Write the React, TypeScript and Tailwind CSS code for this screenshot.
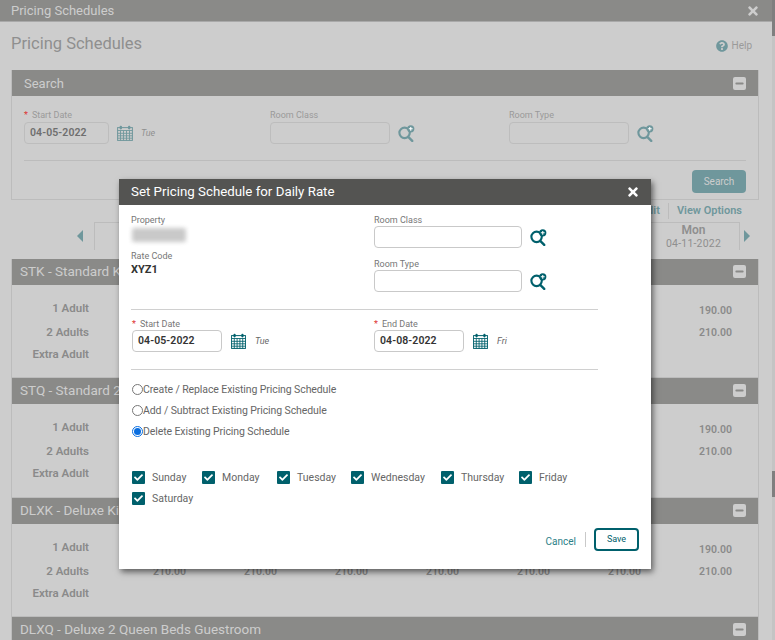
import { Minus } from "lucide-react";
import { FaCheck, FaQuestionCircle, FaTimes } from "react-icons/fa";

const font = "font-['Roboto','Open_Sans',sans-serif]";
const rooms = [
    { name: "STK - Standard King Guestroom", h: "h-[119px]", rows: true },
    { name: "STQ - Standard 2 Queen Beds Guestroom", h: "h-[120px]", rows: true },
    { name: "DLXK - Deluxe King Guestroom", h: "h-[119px]", rows: true },
    { name: "DLXQ - Deluxe 2 Queen Beds Guestroom", h: "h-[26px]", rows: false },
];
const days = ["Sunday", "Monday", "Tuesday", "Wednesday", "Thursday", "Friday", "Saturday"];

function CalendarIcon({ className }: { className: string }) {
    return (
        <svg viewBox="0 0 16 16" preserveAspectRatio="none" className={className} fill="none" stroke="currentColor">
            <rect x="0.6" y="2.6" width="14.8" height="12.8" />
            <path d="M0.5 5.5h15M0.5 8.3h15M0.5 10.8h15M0.5 13.2h15M3.5 5.5v10M6.5 5.5v10M9.5 5.5v10M12.5 5.5v10" strokeWidth="0.9" />
            <rect x="2.6" y="0.8" width="2.4" height="3.6" rx="1.1" fill="currentColor" stroke="none" />
            <rect x="11" y="0.8" width="2.4" height="3.6" rx="1.1" fill="currentColor" stroke="none" />
        </svg>
    );
}

function LookupIcon({ className }: { className: string }) {
    return (
        <svg viewBox="0 0 16 16" className={className} fill="none" stroke="currentColor">
            <circle cx="6.2" cy="7.4" r="4.9" strokeWidth="2" />
            <path d="M9.6 11.2l3.8 3.8" strokeWidth="2.2" strokeLinecap="round" />
            <circle cx="12" cy="3.6" r="3.4" fill="currentColor" stroke="none" />
            <path d="M12 1.8v3.6M10.2 3.6h3.6" stroke="#fff" strokeWidth="1" />
        </svg>
    );
}

function CollapseIcon() {
    return (
        <span className="flex h-[13px] w-[13px] items-center justify-center rounded-[2px] bg-[#cdcdcd]">
            <Minus className="h-[11px] w-[11px] text-[#8a8a88]" strokeWidth={4} />
        </span>
    );
}

function Field({ label, required, width, dim, children }: { label: string; required?: boolean; width: string; dim?: boolean; children?: string }) {
    return (
        <div className="flex flex-col">
            <div className={`h-[14px] text-[9px] ${dim ? "leading-[14px] text-[#9a9a9a]" : "leading-[16px] text-[#777]"}`}>
                {required && <span className="mr-[4px] text-[#d33]">*</span>}
                {label}
            </div>
            <div
                className={`flex h-[22px] items-center rounded-[4px] border px-[5px] text-[10.5px] font-semibold tracking-[0.1px] ${width} ${
                    dim ? "border-[#bdbdbd] text-[#6f6f6f]" : "border-[#c9c9c9] bg-white text-[#333]"
                }`}
            >
                {children}
            </div>
        </div>
    );
}

function Row({ label, value, className, valueClass }: { label: string; value?: string; className: string; valueClass?: string }) {
    return (
        <div className={`flex items-center ${className}`}>
            <div className="w-[77px] shrink-0 whitespace-nowrap text-right">{label}</div>
            <div className="ml-[64px] flex shrink-0">
                {Array.from({ length: 7 }).map((_, i) => (
                    <div key={i} className={`w-[91px] shrink-0 text-[10.5px] ${valueClass ?? ""}`}>
                        {value}
                    </div>
                ))}
            </div>
        </div>
    );
}

function Room({ name, h, rows }: { name: string; h: string; rows: boolean }) {
    return (
        <section className={`${h} shrink-0 overflow-hidden border-x border-b border-[#bcbcbc]`}>
            <div className="flex h-[26px] items-center justify-between bg-[#8a8a88] pb-[1px] pl-[8px] pr-[12px] text-[13.5px] text-[#cdcdcd]">
                {name}
                <CollapseIcon />
            </div>
            {rows && (
                <div className="flex flex-col pt-[12px] text-[11.5px] font-semibold text-[#8a8a8a]">
                    <Row label="1 Adult" value="190.00" className="h-[24px]" valueClass="pt-[3px]" />
                    <Row label="2 Adults" value="210.00" className="h-[23px]" />
                    <Row label="Extra Adult" className="h-[21px]" />
                </div>
            )}
        </section>
    );
}

export default function App() {
    return (
        <div className={`relative flex h-[640px] w-[775px] overflow-hidden bg-[#cdcdcd] ${font}`}>
            <div className="flex w-[772px] shrink-0 flex-col">
                <div className="flex h-[22px] shrink-0 items-center justify-between border-b border-[#a9a9a9] bg-[#8a8a88] pl-[11px] pr-[13px] text-[13px] text-[#cdcdcd]">
                    Pricing Schedules
                    <FaTimes className="h-[14px] w-[12px]" />
                </div>
                <div className="flex h-[48px] shrink-0 items-center justify-between pb-[3px] pl-[11px] pr-[20px]">
                    <h1 className="text-[16.5px] text-[#8f8f8f]">Pricing Schedules</h1>
                    <div className="flex items-center gap-[4px] pt-[2px] text-[10px] text-[#9a9a9a]">
                        <FaQuestionCircle className="h-[12px] w-[12px] text-[#6f979c]" />
                        Help
                    </div>
                </div>
                <div className="ml-[11px] mr-[13px] flex shrink-0 flex-col">
                    <div className="h-[130px] border border-t-0 border-[#bcbcbc]">
                        <div className="flex h-[26px] items-center justify-between bg-[#8a8a88] px-[12px] text-[13px] text-[#cdcdcd]">
                            <span className="pt-[1px]">Search</span>
                            <CollapseIcon />
                        </div>
                        <div className="flex px-[12px] pt-[12px]">
                            <div className="flex w-[246px] items-end gap-[8px]">
                                <Field label="Start Date" required dim width="w-[85px]">
                                    04-05-2022
                                </Field>
                                <CalendarIcon className="mb-[3px] h-[16px] w-[16px] text-[#6f979c]" />
                                <span className="mb-[4px] text-[9px] italic text-[#8f8f8f]">Tue</span>
                            </div>
                            <div className="flex w-[239px] items-end gap-[8px]">
                                <Field label="Room Class" dim width="w-[120px]" />
                                <LookupIcon className="mb-[2px] h-[17px] w-[17px] text-[#6f979c]" />
                            </div>
                            <div className="flex items-end gap-[8px]">
                                <Field label="Room Type" dim width="w-[120px]" />
                                <LookupIcon className="mb-[2px] h-[17px] w-[17px] text-[#6f979c]" />
                            </div>
                        </div>
                        <div className="mx-[12px] mt-[16px] border-t border-[#bcbcbc]" />
                        <div className="flex justify-end pr-[12px] pt-[9px]">
                            <div className="flex h-[23px] w-[54px] items-center justify-center rounded-[4px] bg-[#6f979c] text-[10px] text-[#cdcdcd]">
                                Search
                            </div>
                        </div>
                    </div>
                    <div className="flex h-[22px] items-center justify-end pr-[17px] text-[11px] font-semibold text-[#6f979c]">
                        <span className="mr-[8px]">Edit</span>
                        <span className="h-[16px] border-l border-[#bcbcbc]" />
                        <span className="ml-[8px]">View Options</span>
                    </div>
                    <div className="flex h-[28px] items-center justify-between pl-[66px] pr-[9px]">
                        <span className="h-0 w-0 border-y-[6px] border-r-[6px] border-y-transparent border-r-[#6f979c]" />
                        <div className="ml-[11px] h-[28px] w-[26px] border-l border-t border-[#bcbcbc]" />
                        <div className="flex-1" />
                        <div className="flex h-[28px] w-[92px] flex-col items-center border-r border-t border-[#bcbcbc] text-[10.5px] leading-[14px] text-[#8f8f8f]">
                            <span className="text-[12px] font-semibold">Mon</span>
                            <span className="tracking-[0.2px]">04-11-2022</span>
                        </div>
                        <span className="ml-[4px] h-0 w-0 border-y-[6px] border-l-[6px] border-y-transparent border-l-[#6f979c]" />
                    </div>
                    <div className="h-[9px] shrink-0" />
                    {rooms.map((r) => (
                        <Room key={r.name} name={r.name} h={r.h} rows={r.rows} />
                    ))}
                </div>
            </div>
            <div className="flex w-[3px] shrink-0 flex-col bg-[#c4c4c4]">
                <div className="h-[36px] bg-[#7f7f7f]" />
                <div className="mt-[435px] h-[26px] bg-[#7f7f7f]" />
            </div>

            {/* dialog */}
            <div className="absolute left-[119px] top-[179px] flex h-[390px] w-[532px] flex-col bg-white shadow-[2px_3px_6px_rgba(0,0,0,0.55)]">
                <div className="flex h-[26px] shrink-0 items-center justify-between bg-[#545452] px-[12px] text-[13.3px] text-white">
                    Set Pricing Schedule for Daily Rate
                    <FaTimes className="h-[14px] w-[12px]" />
                </div>
                <div className="flex flex-col px-[12px] pt-[7px]">
                    <div className="flex h-[90px]">
                        <div className="w-[243px] text-[9px] text-[#777]">
                            <div className="h-[14px] leading-[16px]">Property</div>
                            <div className="ml-[1px] mt-[2px] h-[14px] w-[54px] rounded-[2px] bg-[#c9c9c9] blur-[2px]" />
                            <div className="mt-[6px] h-[14px] leading-[16px]">Rate Code</div>
                            <div className="text-[11px] font-bold leading-[16px] text-[#333]">XYZ1</div>
                        </div>
                        <div className="flex flex-col gap-[8px]">
                            <div className="flex items-end gap-[8px]">
                                <Field label="Room Class" width="w-[148px]" />
                                <LookupIcon className="mb-[2px] h-[17px] w-[17px] text-[#00606c]" />
                            </div>
                            <div className="flex items-end gap-[8px]">
                                <Field label="Room Type" width="w-[148px]" />
                                <LookupIcon className="mb-[2px] h-[17px] w-[17px] text-[#00606c]" />
                            </div>
                        </div>
                    </div>
                    <div className="mr-[41px] mt-[7px] border-t border-[#d0d0d0]" />
                    <div className="flex pl-[1px] pt-[6px]">
                        <div className="flex w-[242px] items-end gap-[9px]">
                            <Field label="Start Date" required width="w-[90px]">
                                04-05-2022
                            </Field>
                            <CalendarIcon className="mb-[3px] h-[16px] w-[15px] text-[#00606c]" />
                            <span className="mb-[4px] text-[9px] italic text-[#666]">Tue</span>
                        </div>
                        <div className="flex items-end gap-[9px]">
                            <Field label="End Date" required width="w-[90px]">
                                04-08-2022
                            </Field>
                            <CalendarIcon className="mb-[3px] h-[16px] w-[15px] text-[#00606c]" />
                            <span className="mb-[4px] text-[9px] italic text-[#666]">Fri</span>
                        </div>
                    </div>
                    <div className="mr-[41px] mt-[17px] border-t border-[#d0d0d0]" />
                    <div className="flex flex-col pl-[1px] pt-[9px] text-[10.5px] leading-[21px] tracking-[-0.1px] text-[#666]">
                        {["Create / Replace Existing Pricing Schedule", "Add / Subtract Existing Pricing Schedule", "Delete Existing Pricing Schedule"].map((t, i) => (
                            <label key={t} className="flex items-center">
                                <span
                                    className={`flex h-[11px] w-[11px] items-center justify-center rounded-full border ${
                                        i === 2 ? "border-[#0a6ee0]" : "border-[#777]"
                                    }`}
                                >
                                    {i === 2 && <span className="h-[7px] w-[7px] rounded-full bg-[#0a6ee0]" />}
                                </span>
                                {t}
                            </label>
                        ))}
                    </div>
                    <div className="mt-[25px] flex flex-wrap pl-[1px] text-[10.5px] leading-[21px] text-[#666]">
                        {days.map((d, i) => (
                            <div
                                key={d}
                                className={`flex h-[21px] items-center gap-[7px] ${
                                    ["w-[70px]", "w-[75px]", "w-[74px]", "w-[90px]", "w-[78px]", "w-[80px]", "w-[80px]"][i]
                                }`}
                            >
                                <span className="flex h-[13px] w-[13px] items-center justify-center rounded-[1px] bg-[#00606c]">
                                    <FaCheck className="h-[9px] w-[9px] text-white" />
                                </span>
                                {d}
                            </div>
                        ))}
                    </div>
                </div>
                <div className="mt-auto flex items-center justify-end pb-[18px] pr-[12px]">
                    <span className="mt-[3px] text-[10px] text-[#2b7f88]">Cancel</span>
                    <span className="ml-[9px] mr-[8px] h-[15px] border-l border-[#c9c9c9]" />
                    <button className="h-[23px] w-[45px] rounded-[4px] border-2 border-[#00606c] text-[9px] text-[#00606c]">
                        Save
                    </button>
                </div>
            </div>
        </div>
    );
}
